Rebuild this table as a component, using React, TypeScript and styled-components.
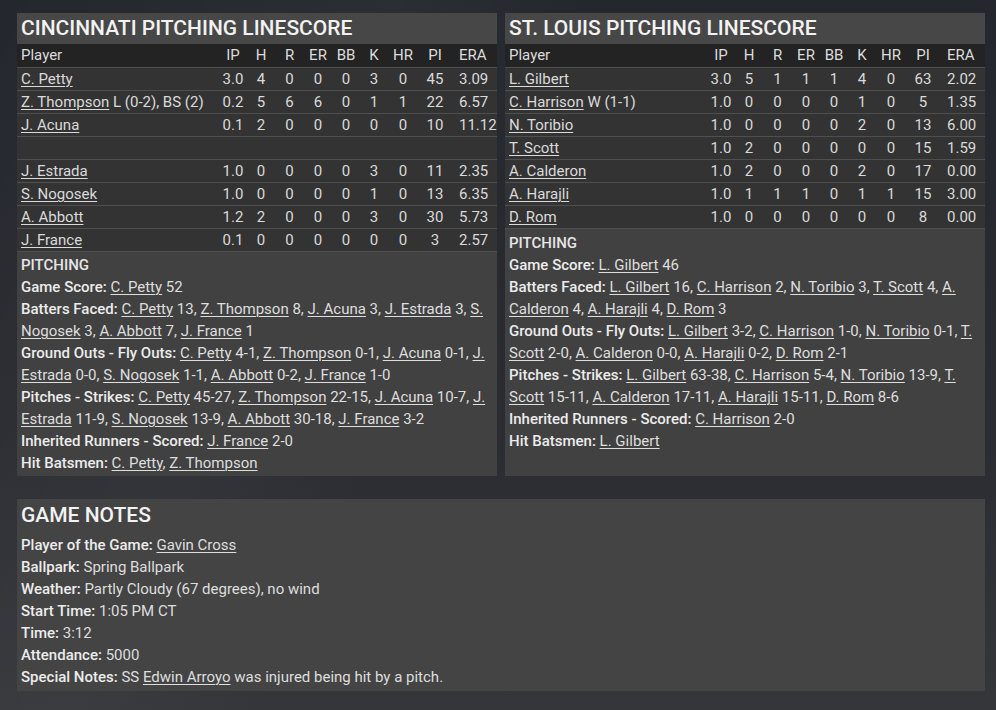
import React from "react";
import styled, { createGlobalStyle } from "styled-components";

const Global = createGlobalStyle`
  html, body { margin: 0; padding: 0; }
  body {
    width: 996px;
    height: 710px;
    overflow: hidden;
    font-family: Roboto, "Noto Sans", "Liberation Sans", sans-serif;
    color: #e2e2e2;
    background:
      linear-gradient(115deg, rgba(255,255,255,0) 0%, rgba(255,255,255,0.03) 30%, rgba(255,255,255,0) 45%),
      linear-gradient(180deg, #24272e 0%, #2a2c31 60%, #35363a 100%);
  }
`;

const Page = styled.div`
  padding: 13px 11px 0 17px;
  display: flex;
  flex-direction: column;
  gap: 23px;
`;

const TopRow = styled.div`
  display: flex;
  gap: 8px;
  align-items: stretch;
`;

const Panel = styled.section`
  width: 480px;
  display: flex;
  flex-direction: column;
  background: #414141;
`;

const Title = styled.h2`
  margin: 0;
  height: 31px;
  line-height: 31px;
  padding: 0 4px;
  background: #474747;
  color: #f2f2f2;
  font-size: 21px;
  font-weight: 500;
  white-space: nowrap;
`;

const Grid = styled.div<{ $head?: boolean }>`
  display: grid;
  grid-template-columns: 1fr 28px 28px 29px 28px 28px 28px 30px 34px 45px;
  height: ${(p) => (p.$head ? 23 : 22)}px;
  line-height: ${(p) => (p.$head ? 23 : 22)}px;
  padding-left: 4px;
  font-size: 15px;
  background: ${(p) => (p.$head ? "#232323" : "#333333")};
  border-bottom: 1px solid #4f4f4f;
  color: ${(p) => (p.$head ? "#dcdcdc" : "#dadada")};
  white-space: nowrap;
`;

const Cell = styled.div<{ $left?: boolean }>`
  text-align: ${(p) => (p.$left ? "left" : "center")};
  padding-left: ${(p) => (p.$left ? "7px" : "0")};
`;

const NameCell = styled.div`
  text-align: left;
`;

const Link = styled.span`
  text-decoration: underline;
  text-underline-offset: 2px;
  text-decoration-thickness: 1px;
`;

const Notes = styled.div<{ $pad?: number }>`
  flex: 1;
  padding: ${(p) => p.$pad ?? 2}px 6px 2px 4px;
  font-size: 15px;
  line-height: 22px;
  color: #dedede;
`;

const SectionLabel = styled.div`
  font-weight: 500;
  color: #e6e6e6;
`;

const Line = styled.div``;

const Label = styled.span`
  font-weight: 500;
  color: #ececec;
`;

const NotesPanel = styled.section`
  width: 968px;
  height: 192px;
  background: #444444;
  box-sizing: border-box;
  padding: 1px 4px 0;
`;

const NotesTitle = styled.h2`
  margin: 0 0 4px;
  height: 30px;
  line-height: 30px;
  font-size: 21px;
  font-weight: 500;
  color: #f2f2f2;
`;

const NotesBody = styled.div`
  font-size: 15px;
  line-height: 22px;
  color: #dedede;
`;

type PRow = { name: string; extra?: string; stats: string[] } | null;

const heads = ["IP", "H", "R", "ER", "BB", "K", "HR", "PI", "ERA"];

const cin: PRow[] = [
  { name: "C. Petty", stats: ["3.0", "4", "0", "0", "0", "3", "0", "45", "3.09"] },
  { name: "Z. Thompson", extra: " L (0-2), BS (2)", stats: ["0.2", "5", "6", "6", "0", "1", "1", "22", "6.57"] },
  { name: "J. Acuna", stats: ["0.1", "2", "0", "0", "0", "0", "0", "10", "11.12"] },
  null,
  { name: "J. Estrada", stats: ["1.0", "0", "0", "0", "0", "3", "0", "11", "2.35"] },
  { name: "S. Nogosek", stats: ["1.0", "0", "0", "0", "0", "1", "0", "13", "6.35"] },
  { name: "A. Abbott", stats: ["1.2", "2", "0", "0", "0", "3", "0", "30", "5.73"] },
  { name: "J. France", stats: ["0.1", "0", "0", "0", "0", "0", "0", "3", "2.57"] },
];

const stl: PRow[] = [
  { name: "L. Gilbert", stats: ["3.0", "5", "1", "1", "1", "4", "0", "63", "2.02"] },
  { name: "C. Harrison", extra: " W (1-1)", stats: ["1.0", "0", "0", "0", "0", "1", "0", "5", "1.35"] },
  { name: "N. Toribio", stats: ["1.0", "0", "0", "0", "0", "2", "0", "13", "6.00"] },
  { name: "T. Scott", stats: ["1.0", "2", "0", "0", "0", "0", "0", "15", "1.59"] },
  { name: "A. Calderon", stats: ["1.0", "2", "0", "0", "0", "2", "0", "17", "0.00"] },
  { name: "A. Harajli", stats: ["1.0", "1", "1", "1", "0", "1", "1", "15", "3.00"] },
  { name: "D. Rom", stats: ["1.0", "0", "0", "0", "0", "0", "0", "8", "0.00"] },
];

type Stat = { label: string; items: [string, string][] };

const cinStats: Stat[] = [
  { label: "Game Score:", items: [["C. Petty", "52"]] },
  {
    label: "Batters Faced:",
    items: [["C. Petty", "13"], ["Z. Thompson", "8"], ["J. Acuna", "3"], ["J. Estrada", "3"], ["S. Nogosek", "3"], ["A. Abbott", "7"], ["J. France", "1"]],
  },
  {
    label: "Ground Outs - Fly Outs:",
    items: [["C. Petty", "4-1"], ["Z. Thompson", "0-1"], ["J. Acuna", "0-1"], ["J. Estrada", "0-0"], ["S. Nogosek", "1-1"], ["A. Abbott", "0-2"], ["J. France", "1-0"]],
  },
  {
    label: "Pitches - Strikes:",
    items: [["C. Petty", "45-27"], ["Z. Thompson", "22-15"], ["J. Acuna", "10-7"], ["J. Estrada", "11-9"], ["S. Nogosek", "13-9"], ["A. Abbott", "30-18"], ["J. France", "3-2"]],
  },
  { label: "Inherited Runners - Scored:", items: [["J. France", "2-0"]] },
  { label: "Hit Batsmen:", items: [["C. Petty", ""], ["Z. Thompson", ""]] },
];

const stlStats: Stat[] = [
  { label: "Game Score:", items: [["L. Gilbert", "46"]] },
  {
    label: "Batters Faced:",
    items: [["L. Gilbert", "16"], ["C. Harrison", "2"], ["N. Toribio", "3"], ["T. Scott", "4"], ["A. Calderon", "4"], ["A. Harajli", "4"], ["D. Rom", "3"]],
  },
  {
    label: "Ground Outs - Fly Outs:",
    items: [["L. Gilbert", "3-2"], ["C. Harrison", "1-0"], ["N. Toribio", "0-1"], ["T. Scott", "2-0"], ["A. Calderon", "0-0"], ["A. Harajli", "0-2"], ["D. Rom", "2-1"]],
  },
  {
    label: "Pitches - Strikes:",
    items: [["L. Gilbert", "63-38"], ["C. Harrison", "5-4"], ["N. Toribio", "13-9"], ["T. Scott", "15-11"], ["A. Calderon", "17-11"], ["A. Harajli", "15-11"], ["D. Rom", "8-6"]],
  },
  { label: "Inherited Runners - Scored:", items: [["C. Harrison", "2-0"]] },
  { label: "Hit Batsmen:", items: [["L. Gilbert", ""]] },
];

function StatLine({ s }: { s: Stat }) {
  return (
    <Line>
      <Label>{s.label}</Label>{" "}
      {s.items.map(([n, v], i) => (
        <React.Fragment key={i}>
          <Link>{n}</Link>
          {v ? " " + v : ""}
          {i < s.items.length - 1 ? ", " : ""}
        </React.Fragment>
      ))}
    </Line>
  );
}

function Linescore({ title, rows, stats, pad }: { title: string; rows: PRow[]; stats: Stat[]; pad: number }) {
  return (
    <Panel>
      <Title>{title}</Title>
      <Grid $head>
        <NameCell>Player</NameCell>
        {heads.map((h, i) => (
          <Cell key={h} $left={i === heads.length - 1}>
            {h}
          </Cell>
        ))}
      </Grid>
      {rows.map((r, ri) =>
        r ? (
          <Grid key={ri}>
            <NameCell>
              <Link>{r.name}</Link>
              {r.extra}
            </NameCell>
            {r.stats.map((v, i) => (
              <Cell key={i} $left={i === r.stats.length - 1}>
                {v}
              </Cell>
            ))}
          </Grid>
        ) : (
          <Grid key={ri} />
        )
      )}
      <Notes $pad={pad}>
        <SectionLabel>PITCHING</SectionLabel>
        {stats.map((s, i) => (
          <StatLine key={i} s={s} />
        ))}
      </Notes>
    </Panel>
  );
}

export default function App() {
  return (
    <>
      <Global />
      <Page>
        <TopRow>
          <Linescore title="CINCINNATI PITCHING LINESCORE" rows={cin} stats={cinStats} pad={2} />
          <Linescore title="ST. LOUIS PITCHING LINESCORE" rows={stl} stats={stlStats} pad={3} />
        </TopRow>
        <NotesPanel>
          <NotesTitle>GAME NOTES</NotesTitle>
          <NotesBody>
            <Line>
              <Label>Player of the Game:</Label> <Link>Gavin Cross</Link>
            </Line>
            <Line>
              <Label>Ballpark:</Label> Spring Ballpark
            </Line>
            <Line>
              <Label>Weather:</Label> Partly Cloudy (67 degrees), no wind
            </Line>
            <Line>
              <Label>Start Time:</Label> 1:05 PM CT
            </Line>
            <Line>
              <Label>Time:</Label> 3:12
            </Line>
            <Line>
              <Label>Attendance:</Label> 5000
            </Line>
            <Line>
              <Label>Special Notes:</Label> SS <Link>Edwin Arroyo</Link> was injured being hit by a pitch.
            </Line>
          </NotesBody>
        </NotesPanel>
      </Page>
    </>
  );
}
